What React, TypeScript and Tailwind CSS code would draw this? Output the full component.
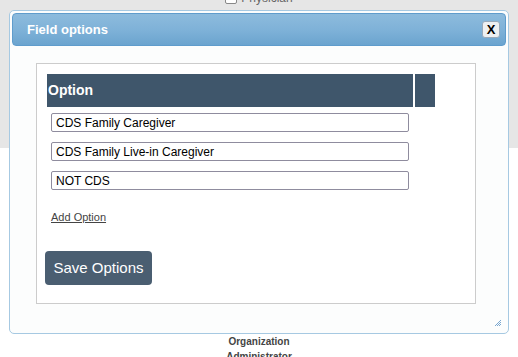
import React from "react";

const options = [
  "CDS Family Caregiver",
  "CDS Family Live-in Caregiver",
  "NOT CDS",
];

function ResizeHandle() {
  return (
    <svg width="8" height="8" viewBox="0 0 8 8" className="absolute bottom-[6px] right-[6px]">
      <path d="M7 1L1 7M7 3L3 7M7 5L5 7" stroke="#7aa7d0" strokeWidth="1" />
    </svg>
  );
}

export default function App() {
  return (
    <div className="relative h-[357px] w-[518px] overflow-hidden bg-white font-['Liberation_Sans',Arial,sans-serif]">
      {/* page behind the dialog */}
      <div className="h-[148px] overflow-hidden bg-[#e6e6e6]">
        <div className="-mt-[10px] flex items-center justify-center gap-[4px] text-[12px] leading-[16px] text-[#666]">
          <span className="h-[11px] w-[12px] rounded-[2px] border border-[#888] bg-white" />
          <span>Physician</span>
        </div>
      </div>
      <div className="mt-[188px] flex flex-col items-center gap-[3px] text-[10px] font-bold leading-[12px] text-[#444]">
        <span>Organization</span>
        <span>Administrator</span>
      </div>

      {/* dialog */}
      <div className="absolute left-[9px] top-[10px] h-[324px] w-[500px] rounded-[5px] border border-[#a6c9e2] bg-[#fcfdfd] p-[2px]">
        <div className="flex h-[33px] items-center justify-between rounded-[4px] border border-[#5f9ccc] bg-linear-to-b from-[#8dbbdd] via-[#7fb2d8] to-[#6ba4cf] pl-[14px] pr-[5px]">
          <span className="text-[13px] font-bold text-white">Field options</span>
          <button
            type="button"
            className="flex h-[17px] w-[18px] items-center justify-center rounded-[3px] border border-[#9ab] bg-[#eef0f2] text-[13px] font-bold leading-none text-black"
          >
            X
          </button>
        </div>

        <div className="ml-[24px] mt-[17px] h-[241px] w-[440px] border border-[#ccc] bg-white p-[10px]">
          <div className="flex h-[33px] gap-[2px]">
            <div className="flex w-[366px] items-center bg-[#3f566b] pl-[1px] text-[14px] font-bold text-white">
              Option
            </div>
            <div className="w-[20px] bg-[#3f566b]" />
          </div>

          <div className="ml-[4px] mt-[6px] flex flex-col gap-[10px]">
            {options.map((opt) => (
              <input
                key={opt}
                defaultValue={opt}
                className="h-[19px] w-[358px] rounded-[2px] border border-[#8f8c9e] px-[4px] text-[12px] text-black outline-none"
              />
            ))}
          </div>

          <a href="#" className="ml-[4px] mt-[21px] block text-[11px] leading-[13px] text-[#444] underline">
            Add Option
          </a>

          <button
            type="button"
            className="-ml-[2px] mt-[27px] flex h-[34px] w-[107px] items-center justify-center rounded-[4px] bg-[#4a5e71] text-[15px] text-white"
          >
            Save Options
          </button>
        </div>
        <ResizeHandle />
      </div>
    </div>
  );
}
